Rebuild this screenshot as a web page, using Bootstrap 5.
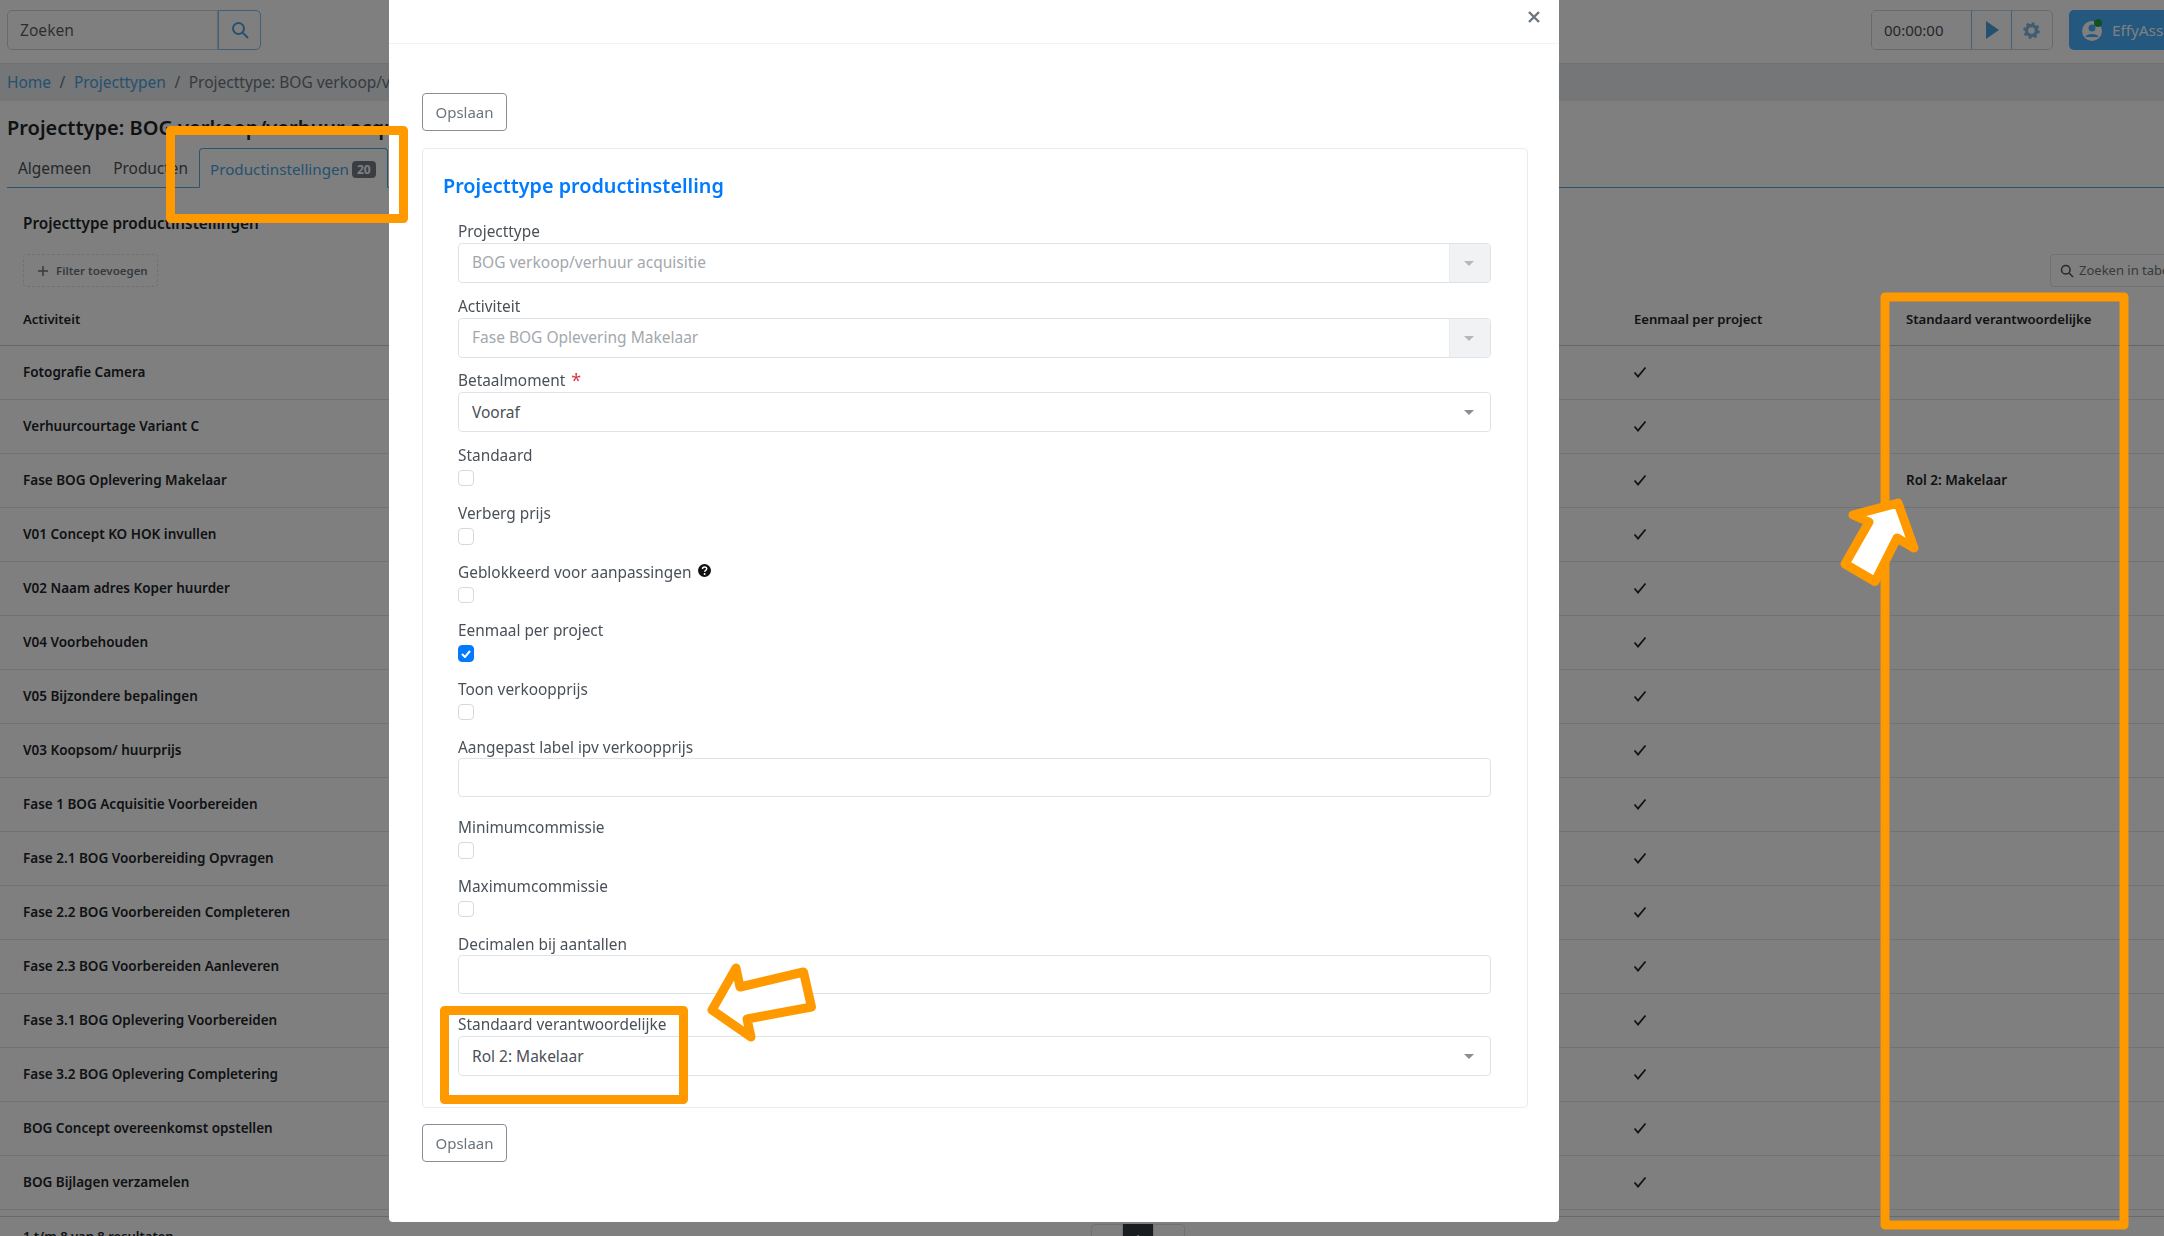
<!DOCTYPE html>
<html lang="nl">
<head>
<meta charset="utf-8">
<title>Projecttype productinstelling</title>
<link href="https://cdn.jsdelivr.net/npm/bootstrap@5.3.0/dist/css/bootstrap.min.css" rel="stylesheet">
<style>
html,body{height:1236px;overflow:hidden}
body{font-family:"Noto Sans","Open Sans",sans-serif;font-size:15.4px;color:#212529;background:#fff}
a{text-decoration:none}
.top-strip{height:64px;border-bottom:1px solid #dee2e6;padding:10px 7px 0}
.find-box{width:254px;height:40px;flex:none}
.find-box .form-control{width:211px;flex:none;font-size:15.6px;border-color:#ced4da;padding-left:12px;height:40px;border-radius:5px 0 0 5px}
.find-btn{width:43px;flex:none;border:1px solid #7fc0ee;border-radius:0 5px 5px 0;background:#fff;display:flex;align-items:center;justify-content:center}
.timer-group{height:40px;width:182px;flex:none;margin-left:auto;border:1px solid #ced4da;border-radius:5px;overflow:hidden}
.timer-val{width:99px;flex:none;padding-left:12px;line-height:38px;background:#fff;font-size:15px;color:#495057}
.timer-btn{width:40px;flex:none;border-left:1px solid #7fc0ee;display:flex;align-items:center;justify-content:center;background:#fff}
.assist-btn{margin-left:16px;width:200px;height:40px;background:#48b0fe;color:#fff;border-radius:5px;display:flex;align-items:center;padding-left:12px;gap:7px;font-size:15.3px;white-space:nowrap;flex:none;margin-right:-112px}
.crumb-bar{height:37px;background:#e9ecef;padding:1px 7px 0;display:flex;align-items:center;font-size:15.5px;color:#6c757d;white-space:nowrap}
.crumb-bar a{color:#4aa3df}
.crumb-bar i{font-style:normal;margin:0 8.5px}
.page-title{font-size:20px;font-weight:600;margin:0;padding:15px 7px 0;height:47px;line-height:24px;white-space:nowrap}
.tab-row{height:40px;margin:0 0 0 7px;border-bottom:1px solid #5ba8dc;display:flex;font-size:15.4px}
.tab-item{padding:9px 11px 0;color:#495057}
.tab-active{width:189px;padding-left:10px;font-size:15.2px;color:#4aa3df;border:1px solid #5ba8dc;border-bottom-color:#fff;background:#fff;border-radius:4px 4px 0 0;height:40px;display:flex;align-items:flex-start;gap:3px;white-space:nowrap}
.count-pill{color:#fff;font-size:12px;font-weight:700;border-radius:4px;padding:2px 5px;margin-top:3px;line-height:13px;background-color:#747c84}
.section-wrap{padding:0 23px}
.section-title{font-size:15.3px;font-weight:600;margin:0;padding-top:24px;height:66px;line-height:22px}
.tool-row{height:33px;display:flex;justify-content:space-between}
.filter-btn{width:135px;height:33px;border:1px dashed #dee2e6;border-radius:4px;font-size:11.5px;font-weight:600;color:#6c757d;display:flex;align-items:center;padding-left:13px;gap:7px}
.table-search{position:absolute;left:2050px;top:254px;width:140px;height:33px;border:1px solid #dee2e6;border-radius:4px;font-size:13px;color:#6c757d;display:flex;align-items:center;padding-left:9px;gap:5px;white-space:nowrap}
.data-table{width:2164px;margin:0;font-size:13.5px;font-weight:600;table-layout:fixed;position:absolute;left:0;top:293px;border-collapse:collapse}
.data-table th{height:52px;padding:3px 0 0 23px;font-weight:600;font-size:13.1px;vertical-align:middle;border-bottom:1px solid #c9ccd0}
.data-table td{height:54px;padding:1px 0 0 23px;vertical-align:middle;border-bottom:1px solid #e3e5e8}
.data-table th.col-once{padding-left:0}
.data-table td.col-once{padding-left:0}
.check-cell{display:block;margin:-2px 0 0 -1px}
.bottom-line{position:absolute;left:0;right:0;top:1216px;border-top:1px solid #d0d2d5}
.result-text{position:absolute;left:23px;top:1227px;font-size:13px;font-weight:600;white-space:nowrap}
.pager{position:absolute;left:1091px;top:1224px;display:flex;height:30px}
.pager span{width:32px;border:1px solid #dee2e6;text-align:center;font-size:13px;color:#6c757d;line-height:28px}
.pager span:first-child{border-radius:4px 0 0 0}
.pager span:last-child{border-radius:0 4px 0 0}
.pager .on{width:30px;background:#343a40;color:#fff;border-color:#343a40}
/* modal */
.edit-dialog{width:1170px;max-width:none;margin:0 0 0 389px;height:1222px}
.edit-content{height:1222px;border:0;border-radius:0 0 4px 4px;display:block}
.edit-head{height:44px;border-bottom:1px solid #f1f2f4;padding:0;position:relative}
.close-x{position:absolute;left:1138px;top:10px;width:14px;height:14px;padding:0;border:0;background:none;display:block;line-height:0}
.edit-body{padding:49px 31px 0 33px}
.save-btn{width:85px;height:38px;padding:0;font-size:15px;color:#6c757d;border:1px solid #868e96;border-radius:4px;background:#fff;display:block}
.form-card{margin-top:17px;height:960px;border:1px solid #e9ecef;border-radius:4px;padding:21px 36px 0 35px;position:relative}
.form-heading{color:#007bff;font-size:19.8px;font-weight:600;line-height:32px;margin:0 0 18px -15px;height:32px;padding-top:0;white-space:nowrap}
.field-lbl{display:block;font-size:15.4px;line-height:24px;height:22px;margin:0;color:#495057;white-space:nowrap}
.req{color:#dc3545;font-size:18px;line-height:14px;vertical-align:-1px;margin-left:2px}
.pick{height:40px;margin:1px 0 11.6px;border:1px solid #dfe3e7;border-radius:4px;display:flex;align-items:center;padding-left:13px;font-size:15.5px;color:#495057;position:relative;background:#fff}
.pick.off{color:#a3a8ad}
.pick.off::after{content:"";position:absolute;right:0;top:0;bottom:0;width:41px;background:#f1f2f4;border-left:1px solid #e9ecef;border-radius:0 4px 4px 0}
.caret{position:absolute;right:16px;top:50%;margin-top:-2px;border:5px solid transparent;border-top-color:#868e96;border-bottom:0;z-index:1}
.pick.off .caret{border-top-color:#b5b9bd}
.cb-field{height:58.5px}
.cb-box{display:block;width:16px;height:16.5px;margin:4px 0 0;float:none;border:1px solid #d5d9de;border-radius:4px;background:#fff}
.cb-box.on{background:#007bff;border-color:#007bff;display:flex;align-items:center;justify-content:center}
.txt-field{height:39px;margin:0 0 19.1px;border:1px solid #dfe3e7;border-radius:4px;background:#fff}
.qmark{display:inline-block;margin-left:6px;vertical-align:1px}
.overlay-art{position:absolute;left:0;top:0;z-index:2000;pointer-events:none}
</style>
</head>
<body>
<div class="d-flex top-strip">
  <div class="d-flex find-box">
    <input class="form-control" value="" placeholder="Zoeken">
    <span class="find-btn"><svg width="18" height="18" viewBox="0 0 18 18" fill="none" stroke="#4aa3df" stroke-width="2"><circle cx="7.5" cy="7.5" r="5.5"/><path d="M11.6 11.6 16.5 16.5" stroke-linecap="round"/></svg></span>
  </div>
  <div class="d-flex timer-group">
    <span class="timer-val">00:00:00</span>
    <span class="timer-btn"><svg width="14" height="18" viewBox="0 0 14 18"><path d="M1 0 14 9 1 18Z" fill="#4aa3df"/></svg></span>
    <span class="timer-btn"><svg width="17" height="17" viewBox="0 0 17 17"><circle cx="8.5" cy="8.5" r="5" fill="none" stroke="#7fb8e0" stroke-width="3.4"/><circle cx="8.5" cy="8.5" r="7" fill="none" stroke="#7fb8e0" stroke-width="2.6" stroke-dasharray="2.75 2.75"/></svg></span>
  </div>
  <div class="assist-btn"><svg width="24" height="24" viewBox="0 0 24 24"><circle cx="11" cy="13" r="10" fill="#fff"/><circle cx="11" cy="10" r="3.5" fill="#48b0fe"/><path d="M4.500 19c1-4 12-4 13 0z" fill="#48b0fe"/><circle cx="17" cy="5" r="4" fill="#1fa34a"/></svg>EffyAssist</div>
</div>
<div class="crumb-bar"><a href="#">Home</a><i>/</i><a href="#">Projecttypen</a><i>/</i><span>Projecttype: BOG verkoop/verhuur acquisitie</span></div>
<h1 class="page-title">Projecttype: BOG verkoop/verhuur acquisitie</h1>
<div class="tab-row">
  <span class="tab-item">Algemeen</span>
  <span class="tab-item">Producten</span>
  <span class="tab-item tab-active">Productinstellingen <span class="count-pill">20</span></span>
</div>
<div class="section-wrap">
  <h2 class="section-title">Projecttype productinstellingen</h2>
  <div class="tool-row"><div class="filter-btn"><svg width="12" height="12" viewBox="0 0 12 12" stroke="#6c757d" stroke-width="1.5"><path d="M6 1v10M1 6h10"/></svg>Filter toevoegen</div></div>
</div>
<div class="table-search"><svg width="14" height="14" viewBox="0 0 14 14" fill="none" stroke="#495057" stroke-width="1.5"><circle cx="5.800" cy="5.800" r="4.300"/><path d="M9 9l4 4"/></svg>Zoeken in tabel</div>
<table class="data-table">
  <colgroup><col style="width:1634px"><col style="width:272px"><col></colgroup>
  <thead><tr><th>Activiteit</th><th class="col-once">Eenmaal per project</th><th class="col-once">Standaard verantwoordelijke</th></tr></thead>
  <tbody id="rows"></tbody>
</table>
<div class="bottom-line"></div>
<div class="result-text">1 t/m 8 van 8 resultaten</div>
<div class="pager"><span>‹</span><span class="on">1</span><span>›</span></div>
<div class="modal-backdrop show"></div>
<div class="modal d-block" tabindex="-1">
  <div class="modal-dialog edit-dialog">
    <div class="modal-content edit-content">
      <div class="edit-head"><button class="close-x" aria-label="Sluiten"><svg width="14" height="14" viewBox="0 0 14 14" stroke="#6c757d" stroke-width="2.400"><path d="M2 2l10 10M12 2 2 12"/></svg></button></div>
      <div class="edit-body">
        <button class="save-btn">Opslaan</button>
        <div class="form-card">
          <h3 class="form-heading">Projecttype productinstelling</h3>
          <label class="field-lbl">Projecttype</label>
          <div class="pick off">BOG verkoop/verhuur acquisitie<span class="caret"></span></div>
          <label class="field-lbl">Activiteit</label>
          <div class="pick off">Fase BOG Oplevering Makelaar<span class="caret"></span></div>
          <label class="field-lbl">Betaalmoment <span class="req">*</span></label>
          <div class="pick">Vooraf<span class="caret"></span></div>
          <div class="cb-field"><label class="field-lbl">Standaard</label><span class="cb-box"></span></div>
          <div class="cb-field"><label class="field-lbl">Verberg prijs</label><span class="cb-box"></span></div>
          <div class="cb-field"><label class="field-lbl">Geblokkeerd voor aanpassingen<svg class="qmark" width="13" height="13" viewBox="0 0 13 13"><circle cx="6.500" cy="6.500" r="6.500" fill="#111"/><path d="M4.500 5c0-2.600 4.200-2.600 4.200-.2 0 1.500-2 1.500-2 3" fill="none" stroke="#fff" stroke-width="1.500"/><circle cx="6.600" cy="10" r="1" fill="#fff"/></svg></label><span class="cb-box"></span></div>
          <div class="cb-field"><label class="field-lbl">Eenmaal per project</label><span class="cb-box on"><svg width="10" height="8" viewBox="0 0 10 8" fill="none" stroke="#fff" stroke-width="2"><path d="M1 4l3 3 5-6"/></svg></span></div>
          <div class="cb-field"><label class="field-lbl">Toon verkoopprijs</label><span class="cb-box"></span></div>
          <label class="field-lbl">Aangepast label ipv verkoopprijs</label>
          <div class="txt-field"></div>
          <div class="cb-field"><label class="field-lbl">Minimumcommissie</label><span class="cb-box"></span></div>
          <div class="cb-field"><label class="field-lbl">Maximumcommissie</label><span class="cb-box"></span></div>
          <label class="field-lbl">Decimalen bij aantallen</label>
          <div class="txt-field"></div>
          <label class="field-lbl">Standaard verantwoordelijke</label>
          <div class="pick">Rol 2: Makelaar<span class="caret"></span></div>
        </div>
        <button class="save-btn mt-3">Opslaan</button>
      </div>
    </div>
  </div>
</div>
<svg class="overlay-art" width="2164" height="1236" viewBox="0 0 2164 1236" fill="none" stroke="#ff9900" stroke-width="9" stroke-linejoin="round">
  <rect x="170.500" y="130.500" width="233" height="88"/>
  <rect x="1885" y="297" width="239" height="928"/>
  <rect x="444.500" y="1010.500" width="239" height="89"/>
  <path d="M712 1010 736 968 740 987 803.500 972 811.500 1007 747 1019 751 1037Z" fill="#fff"/>
  <path d="M1898 503 1853 515 1869 522 1845 564 1875 581.500 1897 538 1914 548Z" fill="#fff"/>
</svg>
<script>
var names=["Fotografie Camera","Verhuurcourtage Variant C","Fase BOG Oplevering Makelaar","V01 Concept KO HOK invullen","V02 Naam adres Koper huurder","V04 Voorbehouden","V05 Bijzondere bepalingen","V03 Koopsom/ huurprijs","Fase 1 BOG Acquisitie Voorbereiden","Fase 2.1 BOG Voorbereiding Opvragen","Fase 2.2 BOG Voorbereiden Completeren","Fase 2.3 BOG Voorbereiden Aanleveren","Fase 3.1 BOG Oplevering Voorbereiden","Fase 3.2 BOG Oplevering Completering","BOG Concept overeenkomst opstellen","BOG Bijlagen verzamelen"];
var check='<svg class="check-cell" width="14" height="14" viewBox="0 0 14 14" fill="none" stroke="#212529" stroke-width="1.800"><path d="M1.500 7.500 5 11.500 12.500 2.500"/></svg>';
document.getElementById("rows").innerHTML=names.map(function(n,i){return "<tr><td>"+n+'</td><td class="col-once">'+check+'</td><td class="col-once">'+(i==2?"Rol 2: Makelaar":"")+"</td></tr>"}).join("");
</script>
</body>
</html>
